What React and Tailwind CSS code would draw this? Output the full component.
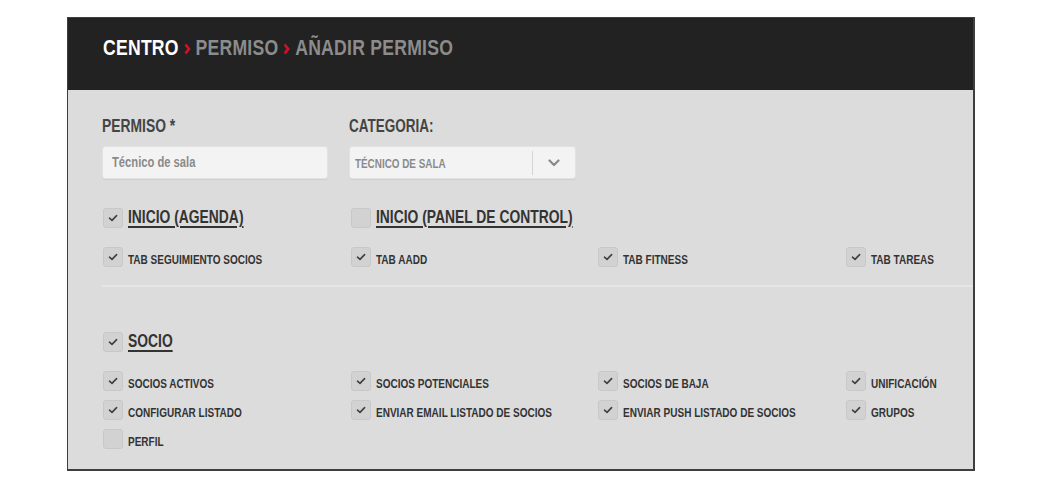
import React from "react";

const FONT = { fontFamily: "'Liberation Sans', Arial, sans-serif" };

function Check() {
  return (
    <svg width="10" height="8" viewBox="0 0 10 8" fill="none">
      <path d="M1.5 4.2 L4 6.4 L8.6 1.6" stroke="#3f3f3f" strokeWidth="1.6" strokeLinecap="round" strokeLinejoin="round" />
    </svg>
  );
}

function Box({ checked = true }) {
  return (
    <span className="w-[20px] h-[20px] shrink-0 rounded-[3px] bg-[#d2d2d2] border border-[#c8c8c8] flex items-center justify-center">
      {checked ? <Check /> : null}
    </span>
  );
}

function Item({ label, checked = true }) {
  return (
    <div className="flex items-center h-[20px] gap-[5px]">
      <Box checked={checked} />
      <span className="inline-block origin-left scale-x-[0.77] translate-y-[2px] text-[13px] font-bold text-[#333] leading-none whitespace-nowrap">{label}</span>
    </div>
  );
}

function Heading({ label, checked = true }) {
  return (
    <div className="flex items-center h-[20px] gap-[5px]">
      <Box checked={checked} />
      <span className="inline-block origin-left scale-x-[0.77] -translate-y-[1px] text-[18px] font-bold text-[#333] leading-none underline underline-offset-[3px] decoration-[1.5px] whitespace-nowrap">{label}</span>
    </div>
  );
}

function Chevron() {
  return (
    <svg className="inline-block mx-[6px] align-baseline" width="9" height="12" viewBox="0 0 9 12" fill="none">
      <path d="M2 1.5 L6.5 6 L2 10.5" stroke="#d0112b" strokeWidth="3" strokeLinejoin="miter" />
    </svg>
  );
}

const cols = "grid grid-cols-[248px_247px_248px_1fr]";

export default function App() {
  return (
    <div className="w-[1060px] h-[494px] bg-white pt-[17px] pl-[67px]" style={FONT}>
      <div className="w-[908px] h-[454px] flex flex-col border-l border-t border-r-2 border-b-2 border-[#3e3e3e]">
        <div className="h-[72px] bg-[#222222] pl-[35px] pt-[17px]">
          <div className="inline-block origin-left scale-x-[0.8] text-[22px] font-bold leading-[26px] tracking-[0.3px] whitespace-nowrap">
            <span className="text-white">CENTRO</span>
            <Chevron />
            <span className="text-[#8c8c8c]">PERMISO</span>
            <Chevron />
            <span className="text-[#8c8c8c]">AÑADIR PERMISO</span>
          </div>
        </div>
        <div className="flex-1 bg-[#dcdcdc] pt-[25px]">
          <div className="pl-[34px] flex gap-[21px]">
            <div className="w-[226px]">
              <div className="origin-left scale-x-[0.77] text-[18px] font-bold text-[#444] leading-[22px] whitespace-nowrap">PERMISO *</div>
              <div className="mt-[9px] h-[33px] bg-[#f3f3f3] rounded-[3px] border border-[#e2e2e2] shadow-[0_1px_1px_rgba(0,0,0,0.06)] flex items-center pl-[9px]">
                <span className="inline-block origin-left scale-x-[0.8] text-[14px] font-bold text-[#8a8a8a] whitespace-nowrap">Técnico de sala</span>
              </div>
            </div>
            <div className="w-[227px]">
              <div className="origin-left scale-x-[0.75] text-[18px] font-bold text-[#444] leading-[22px] whitespace-nowrap">CATEGORIA:</div>
              <div className="mt-[9px] h-[33px] bg-[#f3f3f3] rounded-[3px] border border-[#e2e2e2] shadow-[0_1px_1px_rgba(0,0,0,0.06)] flex items-center">
                <span className="flex-1 pl-[5px] overflow-hidden">
                  <span className="inline-block origin-left scale-x-[0.76] text-[13px] font-bold text-[#8a8a8a] whitespace-nowrap">TÉCNICO DE SALA</span>
                </span>
                <span className="w-px h-[24px] bg-[#d4d4d4]" />
                <span className="w-[42px] flex items-center justify-center">
                  <svg width="12" height="8" viewBox="0 0 12 8" fill="none">
                    <path d="M1.5 1.5 L6 6 L10.5 1.5" stroke="#8a8a8a" strokeWidth="2.2" strokeLinecap="round" strokeLinejoin="round" />
                  </svg>
                </span>
              </div>
            </div>
          </div>

          <div className={`${cols} pl-[35px] mt-[29px]`}>
            <Heading label="INICIO (AGENDA)" />
            <Heading label="INICIO (PANEL DE CONTROL)" checked={false} />
          </div>
          <div className={`${cols} pl-[35px] mt-[19px]`}>
            <Item label="TAB SEGUIMIENTO SOCIOS" />
            <Item label="TAB AADD" />
            <Item label="TAB FITNESS" />
            <Item label="TAB TAREAS" />
          </div>

          <div className="ml-[34px] mt-[18px] h-[2px] bg-[#e6e6e6]" />

          <div className={`${cols} pl-[35px] mt-[45px]`}>
            <Heading label="SOCIO" />
          </div>
          <div className={`${cols} gap-y-[9px] pl-[35px] mt-[19px]`}>
            <Item label="SOCIOS ACTIVOS" />
            <Item label="SOCIOS POTENCIALES" />
            <Item label="SOCIOS DE BAJA" />
            <Item label="UNIFICACIÓN" />
            <Item label="CONFIGURAR LISTADO" />
            <Item label="ENVIAR EMAIL LISTADO DE SOCIOS" />
            <Item label="ENVIAR PUSH LISTADO DE SOCIOS" />
            <Item label="GRUPOS" />
            <Item label="PERFIL" checked={false} />
          </div>
        </div>
      </div>
    </div>
  );
}
